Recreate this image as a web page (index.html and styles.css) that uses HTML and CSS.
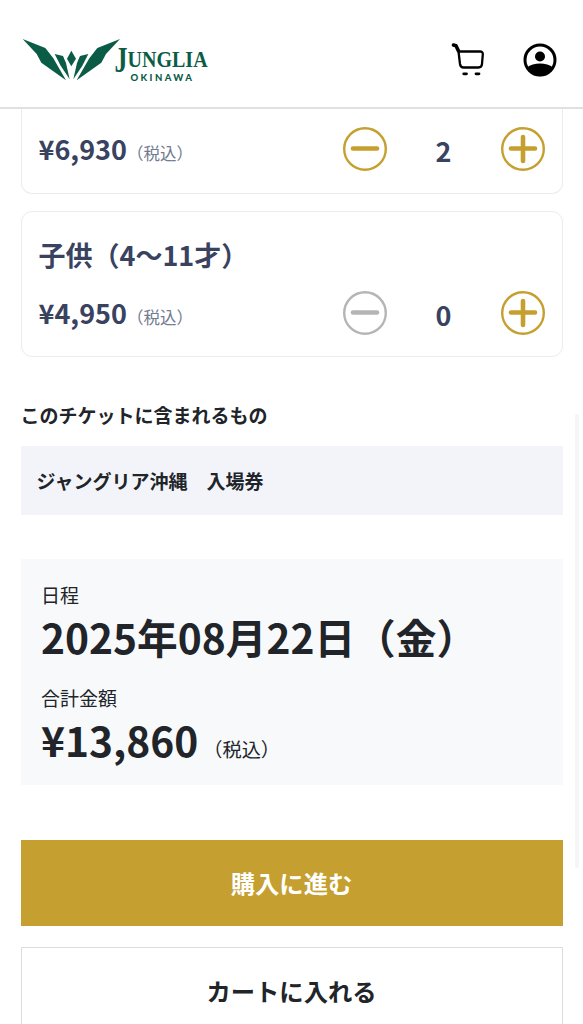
FILE: index.html
```html
<!DOCTYPE html>
<html lang="ja">

<head>
    <meta charset="UTF-8" />
    <meta name="viewport" content="width=device-width, initial-scale=1.0" />
    <title>JUNGLIA OKINAWA</title>
    <link rel="stylesheet" href="styles.css">
</head>

<body>
    <header class="header">
        <svg class="logo" viewBox="0 0 196 56" width="196" height="56">
            <g transform="scale(0.3333)" fill="#0b5c46">
                <path d="M8 12 L76 39 L100 70 L138 136 L64 83 L50 57 Z" />
                <path d="M300 12 L232 39 L208 70 L170 136 L244 83 L258 57 Z" />
                <path d="M104 57 L129 63 L138 84 L149 133 L122 92 Z" />
                <path d="M205 57 L180 63 L171 84 L160 133 L187 92 Z" />
                <path d="M154 47 L168 71 L154 94 L141 71 Z" />
            </g>
            <g class="logo-text">
                <text transform="translate(94.5 37) scale(0.72 1)" font-size="36">J</text>
                <text transform="translate(107.5 32) scale(0.835 1)" font-size="24">UNGLIA</text>
            </g>
            <text class="logo-sub" x="110.5" y="46">OKINAWA</text>
        </svg>
        <div class="header-icons">
            <svg width="36" height="36" viewBox="0 0 36 36" fill="none" stroke="#000" stroke-linecap="round" stroke-linejoin="round">
                <path d="M3.5 3 L6 3.7 L8.5 9" stroke-width="3.6" />
                <path d="M8.5 9.5 H30 Q33 9.5 32.8 12.5 L32 22 Q31.7 25.5 28.5 25.5 H13.5 Q10.5 25.5 10 22 Z" stroke-width="2.3" />
                <path d="M13.7 31.8 H16.5 M26 31.8 H29" stroke-width="2.8" />
            </svg>
            <svg width="34" height="34" viewBox="0 0 34 34">
                <circle cx="17" cy="17" r="15" fill="#fff" stroke="#000" stroke-width="3" />
                <circle cx="17" cy="13.5" r="5" />
                <path d="M4 24.5 C10 19 24 19 30 24.5 C24 36 10 36 4 24.5 Z" />
            </svg>
        </div>
    </header>

    <main class="container">
        <section class="card card-first">
            <div class="card-row">
                <p class="price">¥6,930<span class="tax">（税込）</span></p>
                <div class="counter">
                    <svg class="btn-count" viewBox="0 0 44 44">
                        <circle cx="22" cy="22" r="20.8" />
                        <path d="M10 21.5 H34" />
                    </svg>
                    <span class="number">2</span>
                    <svg class="btn-count" viewBox="0 0 44 44">
                        <circle cx="22" cy="22" r="20.8" />
                        <path d="M10 21.5 H34 M22 10 V34" />
                    </svg>
                </div>
            </div>
        </section>

        <section class="card">
            <h2 class="card-title">子供（4〜11才）</h2>
            <div class="card-row">
                <p class="price">¥4,950<span class="tax">（税込）</span></p>
                <div class="counter">
                    <svg class="btn-count disabled" viewBox="0 0 44 44">
                        <circle cx="22" cy="22" r="20.8" />
                        <path d="M10 21.5 H34" />
                    </svg>
                    <span class="number">0</span>
                    <svg class="btn-count" viewBox="0 0 44 44">
                        <circle cx="22" cy="22" r="20.8" />
                        <path d="M10 21.5 H34 M22 10 V34" />
                    </svg>
                </div>
            </div>
        </section>

        <h3 class="included-title">このチケットに含まれるもの</h3>
        <div class="included">ジャングリア沖縄　入場券</div>

        <section class="summary">
            <p class="label">日程</p>
            <p class="value">2025年08月22日（金）</p>
            <p class="label">合計金額</p>
            <p class="value">¥13,860<span class="tax">（税込）</span></p>
        </section>

        <button class="btn btn-buy">購入に進む</button>
        <button class="btn btn-cart">カートに入れる</button>
    </main>

    <div class="scrollbar"></div>
</body>

</html>
```
FILE: styles.css
```css
* {
    box-sizing: border-box;
}

body {
    font-family: "Noto Sans CJK JP", sans-serif;
    margin: 0;
    height: 100vh;
    display: flex;
    flex-direction: column;
    overflow: hidden;
    background-color: #fff;
    color: #212429;
}

h2,
h3,
p {
    margin: 0;
}

.header {
    flex: none;
    height: 109px;
    padding: 35px 26.5px 0 20px;
    display: flex;
    justify-content: space-between;
    align-items: flex-start;
    border-bottom: 2px solid #e0e0e0;
}

.logo {
    overflow: visible;
}

.logo-text {
    font-family: "Liberation Serif", serif;
    font-weight: bold;
    fill: #0b5c46;
}

.logo-sub {
    font-family: Lato, sans-serif;
    font-size: 9.5px;
    font-weight: 900;
    letter-spacing: 2.4px;
    fill: #0b5c46;
}

.header-icons {
    display: flex;
    align-items: center;
    gap: 37px;
    padding-top: 7px;
}

.container {
    flex: 1;
    min-height: 0;
    overflow: hidden;
    padding: 0 20.5px;
}

.card {
    border: 1.5px solid #ececee;
    border-radius: 11px;
    padding: 23px 17px 21px;
    height: 146px;
    margin-bottom: 42px;
}

.card-first {
    height: 85px;
    border-top: none;
    border-radius: 0 0 11px 11px;
    padding-top: 18px;
    margin-bottom: 17px;
}

.card-title {
    font-size: 27px;
    line-height: 40px;
    color: #39425f;
    margin-bottom: 16px;
}

.card-row {
    display: flex;
    justify-content: space-between;
    align-items: center;
    height: 44px;
}

.price {
    font-size: 27px;
    font-weight: bold;
    line-height: 44px;
    color: #39425f;
    padding-top: 4px;
}

.price .tax {
    font-size: 16.5px;
    font-weight: normal;
    color: #727a90;
}

.counter {
    display: flex;
    align-items: center;
    justify-content: space-between;
    width: 202px;
}

.btn-count {
    width: 44px;
    height: 44px;
    fill: none;
    stroke: #c5a030;
    stroke-width: 2.4;
    stroke-linecap: round;
}

.btn-count path {
    stroke-width: 4.6;
}

.btn-count.disabled {
    stroke: #b5b5b5;
}

.number {
    font-size: 27px;
    font-weight: bold;
    line-height: 44px;
    color: #39425f;
    padding-top: 3px;
}

.included-title {
    font-size: 19px;
    line-height: 31px;
    margin-bottom: 16px;
}

.included {
    height: 69px;
    padding: 0 16px;
    background-color: #f3f4fa;
    font-size: 19px;
    font-weight: bold;
    line-height: 69px;
    margin-bottom: 44px;
}

.summary {
    height: 226px;
    padding: 22px 20.5px;
    background-color: #f8f9fb;
    margin-bottom: 55px;
}

.label {
    font-size: 19px;
    line-height: 28px;
}

.value {
    font-size: 40.7px;
    font-weight: bold;
    line-height: 56px;
    margin-bottom: 19px;
}

.value .tax {
    font-size: 19.2px;
    font-weight: normal;
    margin-left: 5px;
}

.btn {
    display: block;
    width: 100%;
    height: 86px;
    padding: 0;
    border: none;
    font-family: inherit;
    font-size: 24.3px;
    font-weight: bold;
    line-height: 86px;
}

.btn-buy {
    background-color: #c5a030;
    color: #fff;
    margin-bottom: 21px;
}

.btn-cart {
    background-color: #fff;
    color: #212429;
    border: 1.5px solid #d9dddf;
}

.scrollbar {
    position: absolute;
    top: 414px;
    right: 4px;
    width: 4px;
    height: 454px;
    border-radius: 2px;
    background-color: #f5f5f5;
}
```
